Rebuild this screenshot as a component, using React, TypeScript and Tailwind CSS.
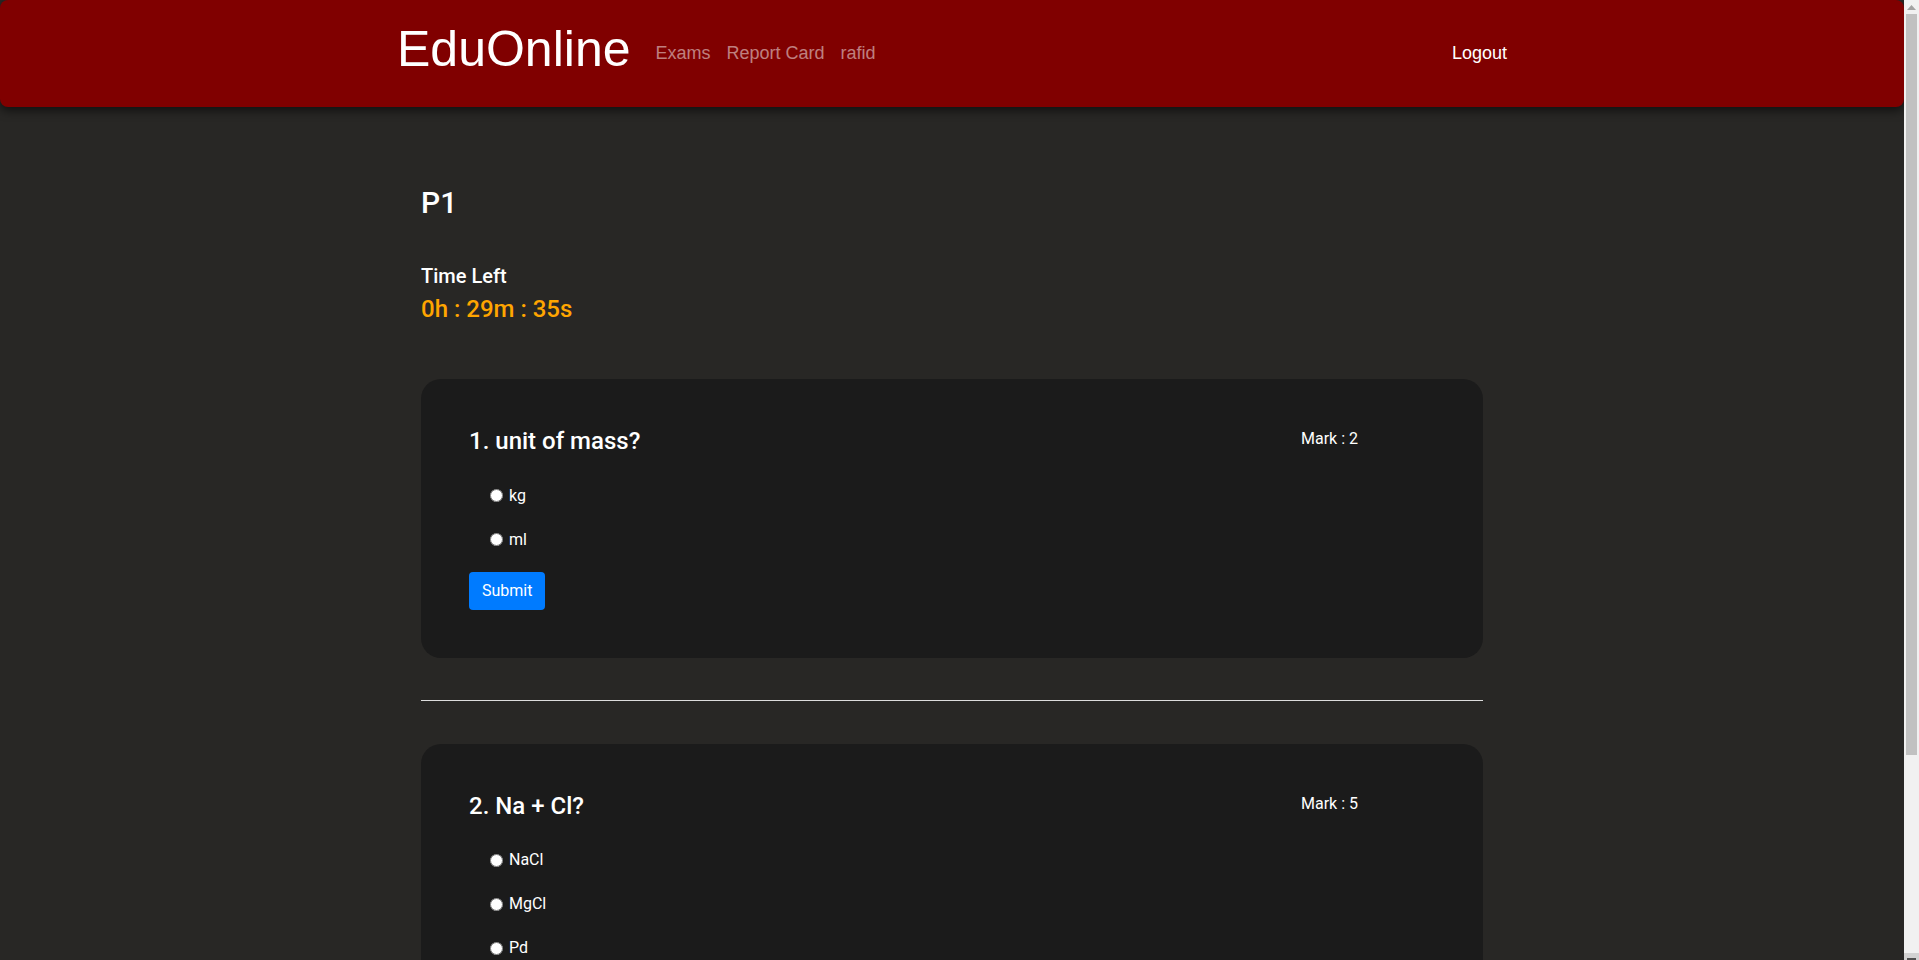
import React, { useState } from 'react';

type Question = {
  id: number;
  text: string;
  mark: number;
  options: string[];
};

const questions: Question[] = [
  { id: 1, text: 'unit of mass?', mark: 2, options: ['kg', 'ml'] },
  { id: 2, text: 'Na + Cl?', mark: 5, options: ['NaCl', 'MgCl', 'Pd', 'KCl'] },
];

const Navbar: React.FC = () => (
  <header className="h-[107px] w-full shrink-0 rounded-lg bg-[#800000] shadow-[0_4px_10px_rgba(0,0,0,0.55)] font-['Liberation_Sans',Arial,sans-serif]">
    <div className="mx-auto flex h-full w-[1140px] items-center justify-between pl-[15px] pr-[15px]">
      <div className="flex items-center">
        <a href="#" className="mb-[10px] mr-[25px] text-[50px] leading-none text-white">
          EduOnline
        </a>
        <nav className="flex items-center gap-[16px] text-[18px] text-white/50">
          <a href="#">Exams</a>
          <a href="#">Report Card</a>
          <a href="#">rafid</a>
        </nav>
      </div>
      <a href="#" className="text-[18px] text-white">
        Logout
      </a>
    </div>
  </header>
);

const QuestionCard: React.FC<{ q: Question }> = ({ q }) => {
  const [selected, setSelected] = useState<string | null>(null);

  return (
    <div className="rounded-[20px] bg-[#1b1b1b] p-12">
      <div className="flex items-start">
        <h3 className="flex-1 text-[24px] leading-[1.2] font-medium text-white">
          {q.id}. {q.text}
        </h3>
        <div className="w-[134px] pt-[2px] text-[16px] leading-[1.2] text-white">Mark : {q.mark}</div>
      </div>

      <div className="mt-[28px]">
        {q.options.map((opt) => (
          <label key={opt} className="mb-5 flex h-6 items-center pl-4 text-[16px] text-white">
            <input
              type="radio"
              name={`q${q.id}`}
              checked={selected === opt}
              onChange={() => setSelected(opt)}
              className="ml-[5px] mr-[6px] h-[13px] w-[13px]"
            />
            <span>{opt}</span>
          </label>
        ))}
      </div>

      <button className="h-[38px] rounded bg-[#007bff] px-[13px] text-[16px] text-white">Submit</button>
    </div>
  );
};

// the reference shows a classic browser scrollbar on the right
const Scrollbar: React.FC = () => (
  <div className="flex h-screen w-[15px] shrink-0 flex-col bg-[#f1f1f1]">
    <div className="flex h-[14px] items-center justify-center">
      <svg width="9" height="5" viewBox="0 0 9 5">
        <path d="M4.5 0L9 5H0z" fill="#a3a3a3" />
      </svg>
    </div>
    <div className="mx-[2px] h-[741px] bg-[#c1c1c1]" />
    <div className="flex-1" />
    <div className="flex h-[7px] items-end justify-center bg-[#d2d2d2]">
      <div className="h-[2px] w-[9px] bg-[#505050]" />
    </div>
  </div>
);

const App: React.FC = () => {
  return (
    <div className="flex h-screen overflow-hidden bg-[#282725] font-['Roboto',sans-serif]">
      <div className="min-w-0 flex-1 overflow-hidden">
        <Navbar />

        <main className="mx-auto w-[1062px] pb-24">
          <h1 className="pt-[78px] text-[30px] leading-[1.2] font-medium text-white">P1</h1>

          <div className="mt-[43px]">
            <h4 className="text-[20px] leading-[1.2] font-medium text-white">Time Left</h4>
            <h3 className="mt-[7px] text-[24px] leading-[1.2] font-medium text-[#ffa500]">0h : 29m : 35s</h3>
          </div>

          <div className="mt-[55px]">
            {questions.map((q, i) => (
              <div key={q.id}>
                <QuestionCard q={q} />
                {i < questions.length - 1 && <hr className="mt-[42px] mb-[43px] border-t border-[#dddddd]" />}
              </div>
            ))}
          </div>
        </main>
      </div>
      <Scrollbar />
    </div>
  );
};

export default App;
